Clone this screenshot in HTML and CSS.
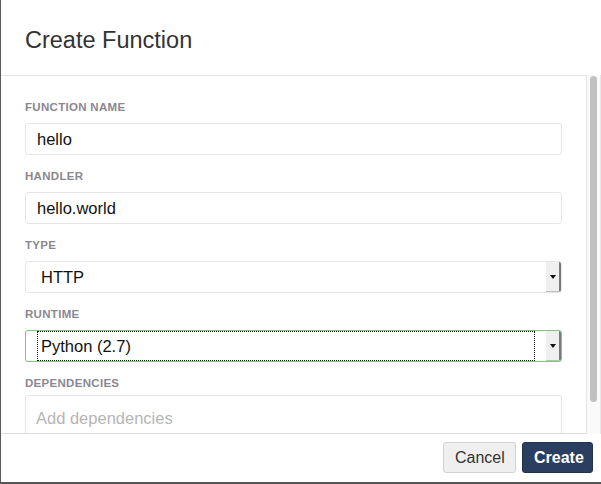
FILE: index.html
```html
<!DOCTYPE html>
<html>
<head>
<meta charset="utf-8">
<link rel="stylesheet" href="styles.css">
</head>
<body>
<div class="modal">
  <header class="modal-header">
    <h1 class="title">Create Function</h1>
  </header>
  <div class="modal-body">
    <div class="form">
      <div class="group">
        <label class="label">FUNCTION NAME</label>
        <div class="input">hello</div>
      </div>
      <div class="group">
        <label class="label">HANDLER</label>
        <div class="input">hello.world</div>
      </div>
      <div class="group">
        <label class="label">TYPE</label>
        <div class="select">
          <span class="select-text">HTTP</span>
          <span class="select-btn"><span class="caret"></span></span>
        </div>
      </div>
      <div class="group">
        <label class="label">RUNTIME</label>
        <div class="select focused">
          <span class="select-text focus-ring">Python (2.7)</span>
          <span class="select-btn"><span class="caret"></span></span>
        </div>
      </div>
      <div class="group">
        <label class="label label-tight">DEPENDENCIES</label>
        <div class="textarea">Add dependencies</div>
      </div>
    </div>
    <div class="scrollbar"><div class="thumb"></div></div>
  </div>
  <footer class="modal-footer">
    <button class="btn btn-default">Cancel</button>
    <button class="btn btn-primary">Create</button>
  </footer>
</div>
</body>
</html>
```

FILE: styles.css
```css
* { box-sizing: border-box; }
html, body { margin: 0; padding: 0; background: #fff; }
body {
  width: 601px;
  height: 484px;
  overflow: hidden;
  font-family: "Liberation Sans", Arial, sans-serif;
}
.modal {
  width: 601px;
  height: 484px;
  border-left: 1px solid #5a5a5a;
  border-bottom: 2px solid #555;
  display: flex;
  flex-direction: column;
}
.modal-header {
  height: 75px;
  padding: 26px 0 0 24px;
}
.title {
  margin: 0;
  font-weight: normal;
  font-size: 23.5px;
  line-height: 28px;
  color: #333;
}
.modal-body {
  height: 359px;
  display: flex;
}
.form {
  width: 586px;
  height: 359px;
  border-top: 1px solid #e5e5e5;
  border-right: 1px solid #e5e5e5;
  border-bottom: 1px solid #ddd;
  padding: 24px 23px 0 24px;
  overflow: hidden;
}
.scrollbar {
  flex: 1;
  background: #fafafa;
  border-right: 1px solid #e8e8e8;
  padding: 1px 3px 0 3px;
}
.thumb {
  width: 7px;
  height: 326px;
  background: #c1c1c1;
  border-radius: 4px;
}
.group {
  margin-bottom: 14px;
  margin-right: 1px;
}
.label {
  display: block;
  font-size: 11.5px;
  letter-spacing: 0.3px;
  line-height: 15px;
  font-weight: bold;
  color: #8a8790;
  margin-bottom: 8px;
}
.label-tight {
  margin-bottom: 4px;
}
.input, .textarea {
  height: 32px;
  border: 1px solid #e6e6e6;
  border-radius: 3px;
  padding: 0 11px;
  font-size: 16.5px;
  line-height: 30px;
  color: #111;
}
.textarea {
  height: 60px;
  color: #b5b5b5;
  border-radius: 3px 3px 0 0;
  padding-top: 7px;
  padding-left: 10px;
}
.select {
  height: 32px;
  border: 1px solid #e6e6e6;
  border-radius: 3px;
  display: flex;
  align-items: stretch;
  padding-left: 15px;
  font-size: 16.5px;
  color: #111;
}
.select.focused {
  border-color: #7cc77c;
  padding-left: 11px;
}
.select-text {
  flex: 1;
  line-height: 30px;
}
.focus-ring {
  outline: 1px dotted #111;
  outline-offset: -1px;
  padding-left: 4px;
  margin-right: 11px;
}
.select-btn {
  width: 15px;
  background: #efefef;
  border-right: 2px solid #7a7a7a;
  border-bottom: 1px solid #bdbdbd;
  border-radius: 0 2px 2px 0;
  display: flex;
  align-items: center;
  justify-content: center;
}
.caret {
  width: 0;
  height: 0;
  border-left: 3.5px solid transparent;
  border-right: 3.5px solid transparent;
  border-top: 4px solid #111;
  margin-left: 1px;
}
.modal-footer {
  flex: 1;
  display: flex;
  justify-content: flex-end;
  align-items: flex-start;
  gap: 6px;
  padding: 8px 8px 0 0;
}
.btn {
  height: 31px;
  border-radius: 3px;
  font-family: "Liberation Sans", Arial, sans-serif;
  font-size: 16px;
  padding: 0 11px;
  cursor: pointer;
}
.btn-default {
  background: #efefef;
  border: 1px solid #d2d2d2;
  color: #333;
  width: 73px;
}
.btn-primary {
  background: #2a3e5f;
  border: 1px solid #22324d;
  color: #fff;
  font-weight: bold;
  width: 71px;
}
```
